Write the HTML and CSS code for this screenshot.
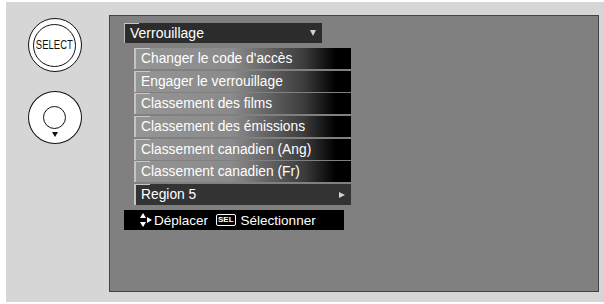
FILE: index.html
```html
<!DOCTYPE html>
<html lang="fr">
<head>
    <meta charset="UTF-8">
    <title>Verrouillage</title>
    <link rel="stylesheet" href="styles.css">
</head>
<body>
    <div class="panel">
        <!-- Remote buttons -->
        <div class="remote">
            <div class="btn-select">
                <div class="btn-select-inner"><span class="btn-label">SELECT</span></div>
            </div>
            <div class="joystick">
                <div class="joystick-knob"></div>
                <span class="joystick-arrow"></span>
            </div>
        </div>

        <!-- TV screen -->
        <div class="screen">
            <div class="dropdown">
                <span>Verrouillage</span>
                <span class="caret"></span>
            </div>
            <ul class="menu">
                <li class="menu-item">Changer le code d'accès</li>
                <li class="menu-item">Engager le verrouillage</li>
                <li class="menu-item">Classement des films</li>
                <li class="menu-item">Classement des émissions</li>
                <li class="menu-item">Classement canadien (Ang)</li>
                <li class="menu-item">Classement canadien (Fr)</li>
                <li class="menu-item menu-item-active">
                    <span>Region 5</span>
                    <span class="arrow-right"></span>
                </li>
            </ul>
            <div class="hint">
                <span class="move-icon">
                    <span class="tri-up"></span>
                    <span class="tri-right"></span>
                    <span class="tri-down"></span>
                </span>
                <span class="hint-text">Déplacer</span>
                <span class="sel-key">SEL</span>
                <span class="hint-text">Sélectionner</span>
            </div>
        </div>
    </div>
</body>
</html>
```

FILE: styles.css
```css
body {
    margin: 0;
    background: #ffffff;
    font-family: 'Liberation Sans', Arial, sans-serif;
}

.panel {
    display: flex;
    margin: 2px 0 0 6px;
    width: 598px;
    height: 300px;
    background: #d6d6d6;
}

/* remote control buttons */
.remote {
    width: 103px;
    display: flex;
    flex-direction: column;
    align-items: center;
    padding-right: 6px;
    box-sizing: border-box;
}

.btn-select {
    margin-top: 16px;
    width: 54px;
    height: 54px;
    border: 1px solid #111;
    border-radius: 50%;
    background: #fff;
    display: flex;
    align-items: center;
    justify-content: center;
    box-sizing: border-box;
}

.btn-select-inner {
    width: 43px;
    height: 43px;
    border: 1.5px solid #111;
    border-radius: 50%;
    box-sizing: border-box;
    display: flex;
    align-items: center;
    justify-content: center;
}

.btn-label {
    display: inline-block;
    font-size: 12.5px;
    color: #111;
    transform: scaleX(0.76);
}

.joystick {
    margin-top: 19px;
    width: 54px;
    height: 53px;
    border: 1px solid #111;
    border-radius: 50%;
    background: #fff;
    box-sizing: border-box;
    display: flex;
    flex-direction: column;
    align-items: center;
}

.joystick-knob {
    margin-top: 14px;
    width: 23px;
    height: 23px;
    border: 1px solid #111;
    border-radius: 50%;
    box-sizing: border-box;
}

.joystick-arrow {
    margin-top: 3px;
    width: 0;
    height: 0;
    border-left: 3px solid transparent;
    border-right: 3px solid transparent;
    border-top: 5px solid #111;
}

/* tv screen */
.screen {
    margin-top: 13px;
    width: 490px;
    height: 277px;
    background: #808080;
    border: 1px solid #444;
    box-sizing: border-box;
    padding: 7px 0 0 14px;
}

.dropdown {
    position: relative;
    width: 198px;
    height: 20px;
    background: #2c2c2c;
    color: #fff;
    font-size: 14px;
    display: flex;
    align-items: center;
    justify-content: space-between;
    padding: 0 6px 0 5px;
    box-sizing: border-box;
    border-left: 1px solid #bdbdbd;
}

.dropdown::before,
.menu-item::before {
    content: "";
    position: absolute;
    left: 0;
    top: 0;
    width: 14px;
    height: 1px;
    background: #c8c8c8;
}

.caret {
    width: 0;
    height: 0;
    border-left: 3px solid transparent;
    border-right: 3px solid transparent;
    border-top: 6px solid #d0d0d0;
}

.menu {
    list-style: none;
    margin: 5px 0 0 10px;
    padding: 0;
    display: flex;
    flex-direction: column;
    gap: 1.7px;
}

.menu-item {
    position: relative;
    width: 217px;
    height: 21px;
    line-height: 21px;
    color: #fff;
    font-size: 13.8px;
    padding-left: 5px;
    box-sizing: border-box;
    border-left: 2px solid #c4c4c4;
    background: linear-gradient(to right, #959595 0%, #8a8a8a 45%, #3c3c3c 78%, #000 93%);
    white-space: nowrap;
}

.menu-item-active {
    background: #333333;
    display: flex;
    align-items: center;
    justify-content: space-between;
    padding-right: 6px;
}

.arrow-right {
    width: 0;
    height: 0;
    border-top: 3.5px solid transparent;
    border-bottom: 3.5px solid transparent;
    border-left: 6px solid #d0d0d0;
}

/* navigation hint bar */
.hint {
    margin-top: 5px;
    width: 220px;
    height: 20px;
    background: #000;
    color: #fff;
    font-size: 13.5px;
    display: flex;
    align-items: center;
    padding-left: 16px;
    box-sizing: border-box;
}

.move-icon {
    position: relative;
    width: 12px;
    height: 14px;
    margin-right: 2px;
}

.tri-up,
.tri-down,
.tri-right {
    position: absolute;
    width: 0;
    height: 0;
}

.tri-up {
    left: 0;
    top: 0;
    border-left: 3px solid transparent;
    border-right: 3px solid transparent;
    border-bottom: 5px solid #fff;
}

.tri-down {
    left: 0;
    bottom: 0;
    border-left: 3px solid transparent;
    border-right: 3px solid transparent;
    border-top: 5px solid #fff;
}

.tri-right {
    left: 7px;
    top: 4px;
    border-top: 3px solid transparent;
    border-bottom: 3px solid transparent;
    border-left: 5px solid #fff;
}

.sel-key {
    margin: 0 5px 0 8px;
    font-size: 8px;
    font-weight: bold;
    line-height: 10px;
    padding: 0 1px;
    border: 1px solid #fff;
    border-radius: 2px;
}
```
